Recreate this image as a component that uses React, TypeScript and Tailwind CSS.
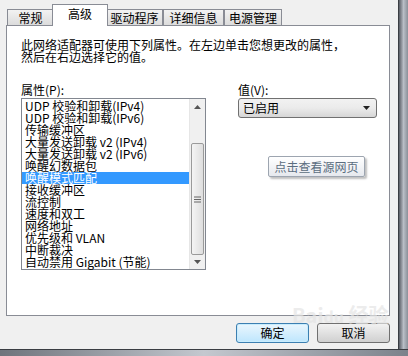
import React from "react";

const items = [
  "UDP 校验和卸载(IPv4)",
  "UDP 校验和卸载(IPv6)",
  "传输缓冲区",
  "大量发送卸载 v2 (IPv4)",
  "大量发送卸载 v2 (IPv6)",
  "唤醒幻数据包",
  "唤醒模式匹配",
  "接收缓冲区",
  "流控制",
  "速度和双工",
  "网络地址",
  "优先级和 VLAN",
  "中断裁决",
  "自动禁用 Gigabit (节能)",
];

const font = { fontFamily: '"Noto Sans CJK SC", "Liberation Sans", sans-serif' };

function Tab({ label, selected, w }: { label: string; selected?: boolean; w: string }) {
  if (selected) {
    return (
      <div
        className={`${w} h-[22px] -mb-px bg-white border border-[#898c95] border-b-0 flex items-start justify-center pt-[2px] text-[12px] leading-[14px] text-black relative z-10 -mx-[2px]`}
      >
        {label}
      </div>
    );
  }
  return (
    <div
      className={`${w} h-[16px] bg-gradient-to-b from-[#f2f2f2] to-[#dcdcdc] border border-[#898c95] border-b-0 flex items-start justify-center pt-[1px] text-[12px] leading-[14px] text-black`}
    >
      {label}
    </div>
  );
}

export default function App() {
  return (
    <div className="w-[408px] h-[356px] bg-[#f0f0f0] relative overflow-hidden" style={font}>
      {/* right window frame */}
      <div className="absolute right-0 top-0 w-[10px] h-full bg-gradient-to-r from-[#5a5e66] via-[#b9bec6] to-[#8a9099] border-l border-[#3a3d42]" />
      {/* bottom window frame */}
      <div className="absolute left-0 bottom-0 w-full h-[7px] bg-gradient-to-r from-[#6f747c] via-[#c4c8cf] to-[#7c828b] border-t border-[#3a3d42]" />

      <div className="flex flex-col pl-[6px] w-[398px]">
        {/* tab strip */}
        <div className="flex items-end h-[25px] pl-[1px] pt-[3px]">
          <Tab label="常规" w="w-[47px]" />
          <Tab label="高级" selected w="w-[56px]" />
          <Tab label="驱动程序" w="w-[57px]" />
          <Tab label="详细信息" w="w-[61px]" />
          <Tab label="电源管理" w="w-[58px]" />
        </div>
        {/* panel */}
        <div className="w-[384px] h-[291px] bg-white border border-[#898c95] flex flex-col pl-[14px] pt-[13px]">
          <div className="text-[12px] leading-[12px] text-black tracking-[0px]">
            <div>此网络适配器可使用下列属性。在左边单击您想更改的属性，</div>
            <div>然后在右边选择它的值。</div>
          </div>
          <div className="flex mt-[21px] gap-[32px]">
            <div className="flex flex-col">
              <div className="text-[12px] leading-[12px] h-[14px]">属性(P):</div>
              <div className="w-[185px] h-[172px] border border-[#828790] flex bg-white">
                <div className="flex-1 flex flex-col pt-[1px]">
                  {items.map((it, i) => (
                    <div
                      key={it}
                      className={`h-[12px] text-[12px] leading-[12px] pl-[3px] whitespace-nowrap ${
                        i === 6 ? "bg-[#3399ff] text-white" : "text-black"
                      }`}
                    >
                      {it}
                    </div>
                  ))}
                </div>
                {/* scrollbar */}
                <div className="w-[16px] h-full flex flex-col bg-[#f0f0f0] border-l border-[#e6e6e6]">
                  <div className="h-[16px] flex items-center justify-center">
                    <svg width="7" height="4" viewBox="0 0 7 4">
                      <path d="M0 4 L3.5 0 L7 4 Z" fill="#555" />
                    </svg>
                  </div>
                  <div className="flex-1 flex flex-col justify-end">
                    <div className="h-[112px] mx-[1px] rounded-[2px] border border-[#9a9a9a] bg-gradient-to-r from-[#f4f4f4] to-[#dedede] flex items-center justify-center">
                      <svg width="7" height="7" viewBox="0 0 7 7">
                        <path d="M0 1h7M0 3.5h7M0 6h7" stroke="#666" strokeWidth="1" />
                      </svg>
                    </div>
                  </div>
                  <div className="h-[14px] flex items-center justify-center">
                    <svg width="7" height="4" viewBox="0 0 7 4">
                      <path d="M0 0 L3.5 4 L7 0 Z" fill="#555" />
                    </svg>
                  </div>
                </div>
              </div>
            </div>
            <div className="flex flex-col">
              <div className="text-[12px] leading-[12px] h-[14px]">值(V):</div>
              <div className="w-[139px] h-[20px] rounded-[3px] border border-[#707070] bg-gradient-to-b from-[#f2f2f2] via-[#ebebeb] to-[#d6d6d6] flex items-center justify-between pl-[4px] pr-[6px]">
                <span className="text-[12px] leading-[12px]">已启用</span>
                <svg width="7" height="4" viewBox="0 0 7 4">
                  <path d="M0 0 L3.5 4 L7 0 Z" fill="#222" />
                </svg>
              </div>
            </div>
          </div>
        </div>
        {/* buttons */}
        <div className="flex justify-end gap-[8px] pr-[8px] mt-[7px]">
          <button className="w-[73px] h-[20px] rounded-[3px] border border-[#3c7fb1] bg-gradient-to-b from-[#eaf6fd] to-[#bee6fd] shadow-[inset_0_0_0_1px_#c8ecfd] text-[12px] leading-[12px]">
            确定
          </button>
          <button className="w-[73px] h-[20px] rounded-[3px] border border-[#707070] bg-gradient-to-b from-[#f2f2f2] to-[#d0d0d0] text-[12px] leading-[12px]">
            取消
          </button>
        </div>
      </div>

      {/* tooltip overlay */}
      <div className="absolute left-[268px] top-[156px] w-[97px] h-[21px] bg-gradient-to-b from-white to-[#e6e9ee] border border-[#9da5b0] rounded-[2px] shadow-[2px_2px_2px_rgba(0,0,0,0.25)] flex items-center justify-center text-[12px] leading-[12px] text-[#5b6d80]">
        点击查看源网页
      </div>

      {/* watermark */}
      <div className="absolute left-[292px] top-[305px] text-[20px] leading-[20px] font-bold text-[#e4e4e4] opacity-70 pointer-events-none">
        Bai<span className="text-[16px]">du</span> 经验
      </div>
    </div>
  );
}
